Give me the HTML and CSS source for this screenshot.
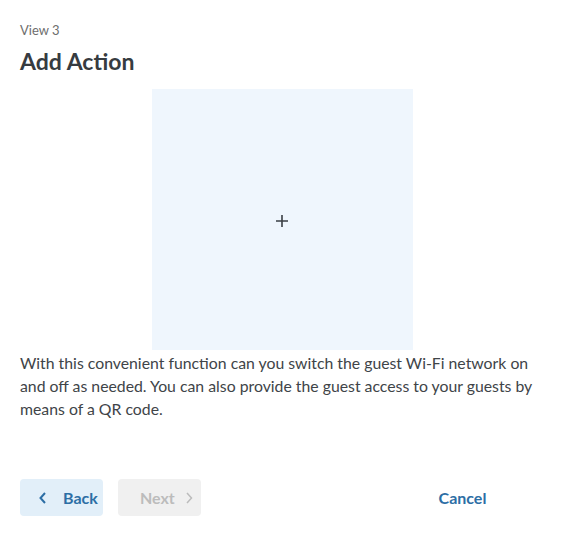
FILE: index.html
```html
<!DOCTYPE html>
<html lang="en">
  <head>
    <meta charset="UTF-8" />
    <meta name="viewport" content="width=device-width, initial-scale=1.0" />
    <title>Add Action</title>
    <link rel="stylesheet" href="styles.css">
  </head>
  <body>
    <div class="view">
      <div class="eyebrow">View 3</div>
      <h1>Add Action</h1>
      <div class="media">
        <svg class="plus" width="12" height="12" viewBox="0 0 12 12"><path d="M6 0 V12 M0 6 H12" stroke="currentColor" stroke-width="1.6"/></svg>
      </div>
      <p class="desc">
        With this convenient function can you switch the guest Wi-Fi network on
        and off as needed. You can also provide the guest access to your guests by
        means of a QR code.
      </p>
      <div class="actions">
        <button class="btn btn-back">
          <svg width="10" height="14" viewBox="0 0 10 14"><path d="M7 2 L2.5 7 L7 12" fill="none" stroke="currentColor" stroke-width="2"/></svg>
          Back
        </button>
        <button class="btn btn-next" disabled>
          Next
          <svg width="10" height="14" viewBox="0 0 10 14"><path d="M3 2 L7.5 7 L3 12" fill="none" stroke="currentColor" stroke-width="1.5"/></svg>
        </button>
        <button class="btn btn-cancel">Cancel</button>
      </div>
    </div>
  </body>
</html>
```

FILE: styles.css
```css
body {
  margin: 0;
  font-family: Lato, "Liberation Sans", sans-serif;
  background: #fff;
  color: #3c4146;
}
.view {
  padding: 22px 20px 0;
}
.eyebrow {
  font-size: 13px;
  color: #6e6e6e;
  line-height: 16px;
}
h1 {
  margin: 9px 0 14px;
  font-size: 23px;
  line-height: 28px;
  font-weight: 700;
  color: #363b40;
}
.media {
  width: 261px;
  height: 261px;
  margin: 0 auto;
  background: #eff6fd;
  display: flex;
  align-items: center;
  justify-content: center;
}
.plus {
  color: #3a3f44;
  margin: 3px 1px 0 0;
}
.desc {
  margin: 1px 0 0;
  font-size: 15.8px;
  line-height: 23px;
  color: #404448;
}
.actions {
  display: flex;
  align-items: center;
  gap: 15px;
  margin-top: 59px;
}
.btn {
  font-family: inherit;
  font-size: 16px;
  font-weight: 700;
  border: none;
  border-radius: 4px;
  height: 37px;
  width: 83px;
  padding: 0;
  display: flex;
  align-items: center;
  cursor: pointer;
}
.btn-back {
  background: #e2eff9;
  color: #2c6ea5;
  padding-left: 18px;
  gap: 15px;
}
.btn-next {
  background: #f0f0f0;
  color: #bcbcbc;
  cursor: default;
  padding-left: 22px;
  gap: 9px;
}
.btn-cancel {
  margin-left: auto;
  margin-right: 40px;
  justify-content: center;
  background: none;
  color: #2c6ea5;
}
```
